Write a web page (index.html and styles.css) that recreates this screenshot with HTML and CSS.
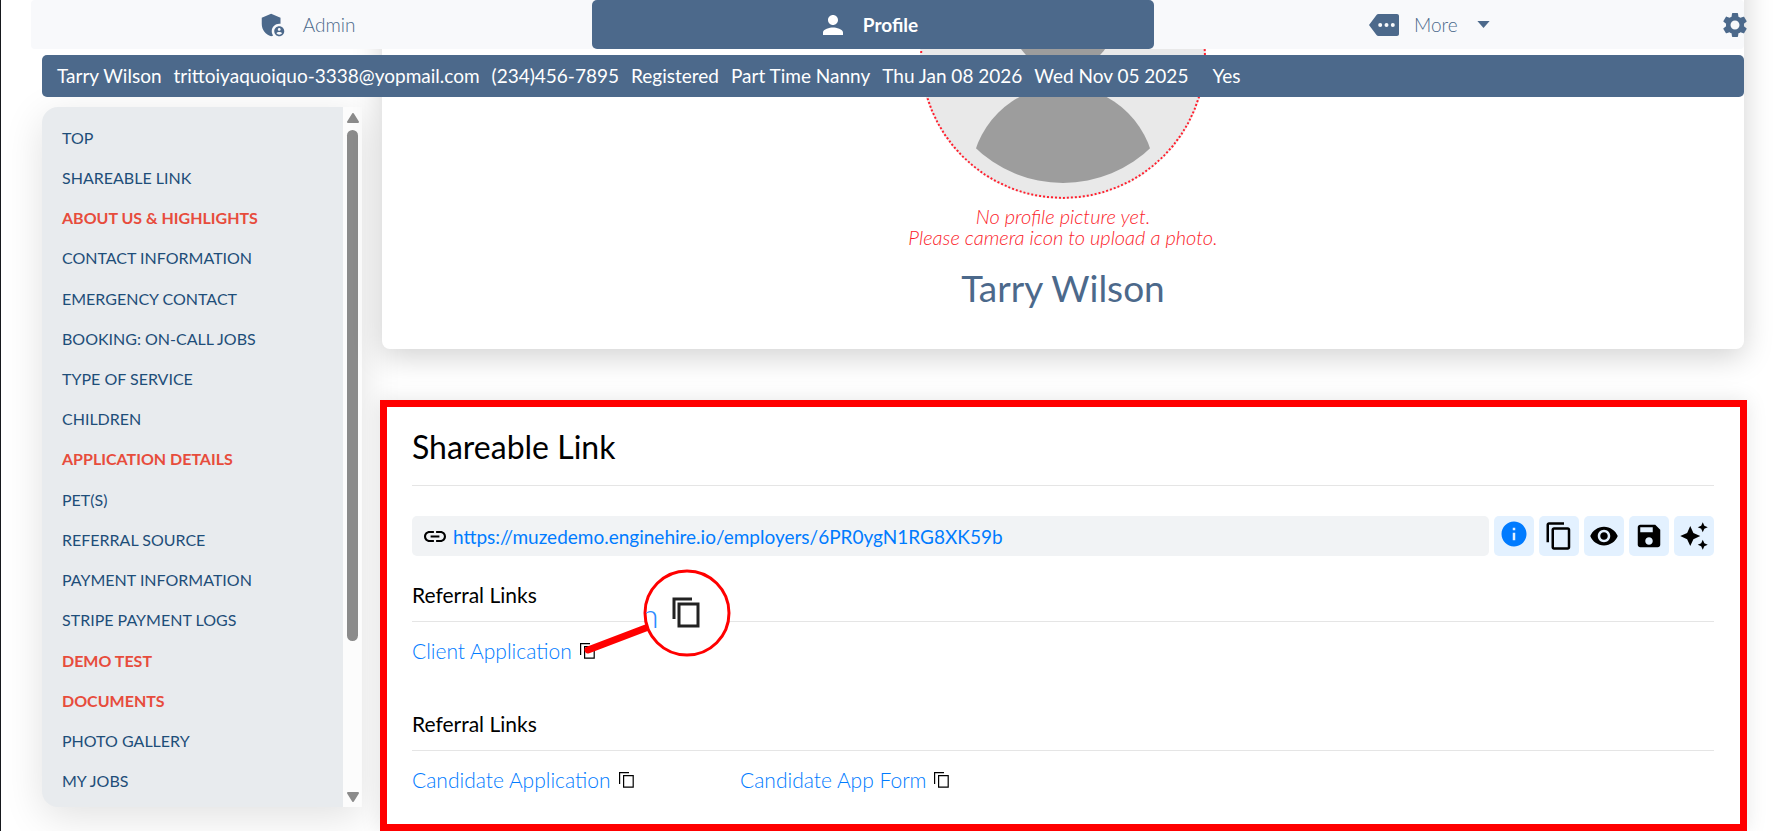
FILE: index.html
```html
<!DOCTYPE html>
<html lang="en">
<head>
<meta charset="utf-8">
<title>Tarry Wilson - Profile</title>
<link rel="stylesheet" href="styles.css">
</head>
<body>
<svg class="sprite" aria-hidden="true">
  <symbol id="copy" viewBox="0 0 24 24"><path d="M16 1H4c-1.100 0-2 .9-2 2v14h2V3h12V1zm3 4H8c-1.100 0-2 .9-2 2v14c0 1.100.9 2 2 2h11c1.100 0 2-.9 2-2V7c0-1.100-.9-2-2-2zm0 16H8V7h11v14z"/></symbol>
  <symbol id="copy-thin" viewBox="0 0 15 16"><path d="M.6 12V.6H10M4.600 3.600h9.600v11.600H4.600z" fill="none" stroke="currentColor" stroke-width="1.200"/></symbol>
</svg>

<header class="top">
  <nav class="tabs">
    <a class="tab" href="#admin">
      <svg class="tab-icon" viewBox="0 0 24 24"><path d="M17 11c.34 0 .67.040 1 .09V6.270L10.500 3 3 6.270v4.910c0 4.540 3.200 8.790 7.500 9.820.55-.13 1.080-.32 1.600-.55-.69-.98-1.100-2.170-1.100-3.450 0-3.310 2.690-6 6-6z"/><path fill-rule="evenodd" d="M17 13c-2.210 0-4 1.790-4 4s1.790 4 4 4 4-1.790 4-4-1.790-4-4-4zm0 1.380c.62 0 1.120.51 1.120 1.120s-.51 1.120-1.120 1.120-1.120-.51-1.120-1.120.5-1.120 1.120-1.120zm0 5.370c-.93 0-1.740-.46-2.240-1.170.05-.72 1.510-1.080 2.240-1.080s2.190.36 2.240 1.080c-.5.71-1.310 1.170-2.240 1.170z"/></svg>
      <span>Admin</span>
    </a>
    <a class="tab tab-active" href="#profile" aria-current="page">
      <svg class="tab-icon" viewBox="0 0 24 24"><path d="M12 12c2.210 0 4-1.790 4-4s-1.790-4-4-4-4 1.790-4 4 1.790 4 4 4zm0 2c-2.670 0-8 1.340-8 4v2h16v-2c0-2.660-5.330-4-8-4z"/></svg>
      <span>Profile</span>
    </a>
    <button class="tab tab-more" type="button">
      <svg class="more-icon" viewBox="0 0 30 22"><path fill-rule="evenodd" d="M28 0H9.500C8.600 0 8 .4 7.500 1.100L0 11l7.500 9.900c.5.700 1.100 1.100 2 1.100H28c1.100 0 2-.9 2-2V2c0-1.100-.9-2-2-2zM11.200 13a2 2 0 1 1 0-4 2 2 0 0 1 0 4zm6.300 0a2 2 0 1 1 0-4 2 2 0 0 1 0 4zm6.300 0a2 2 0 1 1 0-4 2 2 0 0 1 0 4z"/></svg>
      <span>More</span>
      <svg class="caret" viewBox="0 0 14 8"><path d="M0 0h14L7 8z"/></svg>
    </button>
    <button class="gear" type="button" aria-label="Settings">
      <svg class="gear-icon" viewBox="0 0 24 24"><path d="M19.140 12.940c.04-.3.060-.61.060-.94 0-.32-.02-.64-.07-.94l2.030-1.580c.18-.14.230-.41.120-.61l-1.920-3.320c-.12-.22-.37-.29-.59-.22l-2.390.96c-.5-.38-1.030-.7-1.620-.94L14.400 2.810c-.04-.24-.24-.41-.48-.41h-3.840c-.24 0-.43.170-.47.410L9.250 5.350c-.59.240-1.130.570-1.620.940L5.240 5.330c-.22-.08-.47 0-.59.220L2.740 8.870c-.12.210-.08.470.12.610l2.030 1.580c-.05.300-.09.630-.09.940s.02.640.070.940l-2.030 1.580c-.18.140-.23.410-.12.610l1.920 3.320c.12.220.370.290.590.220l2.390-.96c.5.380 1.030.7 1.620.940l.36 2.540c.05.240.240.410.480.410h3.840c.24 0 .44-.17.470-.41l.36-2.540c.59-.24 1.130-.56 1.620-.94l2.390.96c.22.080.470 0 .59-.22l1.920-3.320c.12-.22.070-.47-.12-.61l-2.010-1.580zM12 15.600c-1.980 0-3.600-1.620-3.600-3.600s1.620-3.600 3.600-3.600 3.600 1.620 3.600 3.600-1.620 3.600-3.600 3.600z"/></svg>
    </button>
  </nav>
  <div class="summary">
    <span>Tarry Wilson</span>
    <span>trittoiyaquoiquo-3338@yopmail.com</span>
    <span>(234)456-7895</span>
    <span>Registered</span>
    <span>Part Time Nanny</span>
    <span>Thu Jan 08 2026</span>
    <span>Wed Nov 05 2025</span>
    <span class="summary-flag">Yes</span>
  </div>
</header>

<div class="layout">
  <aside class="sidebar">
    <ul class="menu">
      <li><a href="#top">TOP</a></li>
      <li><a href="#share">SHAREABLE LINK</a></li>
      <li><a class="alert" href="#about">ABOUT US &amp; HIGHLIGHTS</a></li>
      <li><a href="#contact">CONTACT INFORMATION</a></li>
      <li><a href="#emergency">EMERGENCY CONTACT</a></li>
      <li><a href="#booking">BOOKING: ON-CALL JOBS</a></li>
      <li><a href="#service">TYPE OF SERVICE</a></li>
      <li><a href="#children">CHILDREN</a></li>
      <li><a class="alert" href="#application">APPLICATION DETAILS</a></li>
      <li><a href="#pets">PET(S)</a></li>
      <li><a href="#referral">REFERRAL SOURCE</a></li>
      <li><a href="#payment">PAYMENT INFORMATION</a></li>
      <li><a href="#stripe">STRIPE PAYMENT LOGS</a></li>
      <li><a class="alert" href="#demo">DEMO TEST</a></li>
      <li><a class="alert" href="#documents">DOCUMENTS</a></li>
      <li><a href="#gallery">PHOTO GALLERY</a></li>
      <li><a href="#jobs">MY JOBS</a></li>
    </ul>
    <div class="scrollbar" aria-hidden="true">
      <svg class="arrow" viewBox="0 0 12 10"><path d="M6 1l5 8H1z" stroke-width="2" stroke-linejoin="round"/></svg>
      <div class="track"><div class="thumb"></div></div>
      <svg class="arrow" viewBox="0 0 12 10"><path d="M6 9l5-8H1z" stroke-width="2" stroke-linejoin="round"/></svg>
    </div>
  </aside>

  <main class="content">
    <section class="card profile">
      <div class="avatar">
        <svg class="avatar-art" viewBox="0 0 282 282" aria-hidden="true">
          <clipPath id="bust"><circle cx="141" cy="141" r="127"/></clipPath>
          <g fill="#9d9d9d"><circle cx="141" cy="102" r="53"/><circle cx="141" cy="263" r="92" clip-path="url(#bust)"/></g>
        </svg>
      </div>
      <p class="hint">No profile picture yet.<br>Please camera icon to upload a photo.</p>
      <h1 class="name">Tarry Wilson</h1>
    </section>

    <section class="share" id="share">
      <h2 class="share-title">Shareable Link</h2>
      <div class="link-row">
        <div class="link-box">
          <svg class="link-icon" viewBox="2 7 20 10"><path d="M3.900 12c0-1.710 1.390-3.100 3.100-3.100h4V7H7c-2.760 0-5 2.240-5 5s2.240 5 5 5h4v-1.900H7c-1.710 0-3.100-1.390-3.100-3.100zM8 13h8v-2H8v2zm9-6h-4v1.900h4c1.710 0 3.100 1.390 3.100 3.100s-1.390 3.100-3.100 3.100h-4V17h4c2.760 0 5-2.240 5-5s-2.240-5-5-5z"/></svg>
          <a href="https://muzedemo.enginehire.io/employers/6PR0ygN1RG8XK59b">https://muzedemo.enginehire.io/employers/6PR0ygN1RG8XK59b</a>
        </div>
        <button class="action action-info" type="button" aria-label="Info"><svg viewBox="0 0 24 24"><path d="M12 2C6.480 2 2 6.480 2 12s4.480 10 10 10 10-4.480 10-10S17.520 2 12 2zm1 15h-2v-6h2v6zm0-8h-2V7h2v2z"/></svg></button>
        <button class="action" type="button" aria-label="Copy"><svg viewBox="0 0 24 24"><use href="#copy"/></svg></button>
        <button class="action" type="button" aria-label="View"><svg viewBox="0 0 24 24"><path d="M12 4.500C7 4.500 2.730 7.610 1 12c1.730 4.390 6 7.500 11 7.500s9.270-3.110 11-7.500c-1.730-4.390-6-7.500-11-7.500zM12 17c-2.760 0-5-2.240-5-5s2.240-5 5-5 5 2.240 5 5-2.240 5-5 5zm0-8c-1.660 0-3 1.340-3 3s1.340 3 3 3 3-1.340 3-3-1.340-3-3-3z"/></svg></button>
        <button class="action" type="button" aria-label="Save"><svg viewBox="0 0 24 24"><path d="M17 3H5c-1.110 0-2 .9-2 2v14c0 1.100.89 2 2 2h14c1.100 0 2-.9 2-2V7l-4-4zm-5 16c-1.660 0-3-1.340-3-3s1.340-3 3-3 3 1.340 3 3-1.340 3-3 3zm3-10H5V5h10v4z"/></svg></button>
        <button class="action" type="button" aria-label="Generate"><svg viewBox="0 0 24 24"><path d="M19 9l1.250-2.750L23 5l-2.750-1.250L19 1l-1.250 2.750L15 5l2.750 1.250L19 9zm-7.500.5L9 4 6.500 9.500 1 12l5.500 2.500L9 20l2.500-5.500L17 12l-5.500-2.500zM19 15l-1.250 2.750L15 19l2.750 1.250L19 23l1.250-2.750L23 19l-2.750-1.250L19 15z"/></svg></button>
      </div>

      <h3 class="sub-title">Referral Links</h3>
      <div class="refs">
        <div class="ref"><a href="#client-app">Client Application</a><button class="mini" type="button" aria-label="Copy client link"><svg viewBox="0 0 15 16"><use href="#copy-thin"/></svg></button></div>
      </div>

      <h3 class="sub-title">Referral Links</h3>
      <div class="refs refs-last">
        <div class="ref"><a href="#candidate-app">Candidate Application</a><button class="mini" type="button" aria-label="Copy candidate link"><svg viewBox="0 0 15 16"><use href="#copy-thin"/></svg></button></div>
        <div class="ref"><a href="#candidate-form">Candidate App Form</a><button class="mini" type="button" aria-label="Copy form link"><svg viewBox="0 0 15 16"><use href="#copy-thin"/></svg></button></div>
      </div>

      <svg class="callout" viewBox="0 0 154 88" aria-hidden="true">
        <clipPath id="lens"><circle cx="110" cy="44" r="41"/></clipPath>
        <path d="M11 81L74 57" stroke="#f00" stroke-width="7" stroke-linecap="round"/>
        <circle cx="110" cy="44" r="42" fill="#fff" stroke="#f00" stroke-width="3"/>
        <text class="callout-text" x="63" y="59" clip-path="url(#lens)">n</text>
        <path d="M97 50V30h18M102 35h19v22h-19z" fill="none" stroke="#222" stroke-width="3"/>
      </svg>
    </section>
  </main>
</div>
</body>
</html>
```
FILE: styles.css
```css
* {
  box-sizing: border-box;
}

body {
  margin: 0;
  height: 100vh;
  overflow: hidden;
  border-left: 1px solid #16181d;
  background: #fff;
  color: #000;
  font-family: Lato, "Open Sans", sans-serif;
  font-size: 19px;
}

a {
  color: #007bff;
  text-decoration: none;
}

button {
  padding: 0;
  border: 0;
  background: none;
  font: inherit;
}

svg {
  display: block;
  fill: currentColor;
}

.sprite {
  position: absolute;
  width: 0;
  height: 0;
}

.top {
  position: absolute;
  z-index: 2;
  top: 0;
  left: 31px;
  right: 29px;
}

.tabs {
  display: flex;
  height: 49px;
  border-radius: 4px;
  background: #f8f9fb;
}

.tab {
  display: flex;
  flex: 1;
  align-items: center;
  justify-content: center;
  gap: 15px;
  padding: 0 10px 0 0;
  border-radius: 5px;
  color: #4c698b;
  font-weight: 300;
}

.tab-active {
  background: #4c698b;
  color: #fff;
  font-weight: 700;
}

.tab-icon {
  width: 30px;
  height: 30px;
}

.more-icon {
  width: 30px;
  height: 22px;
}

.caret {
  width: 13px;
  height: 7px;
  margin-left: 4px;
}

.gear {
  display: flex;
  align-items: center;
  width: 29px;
  padding-left: 5px;
  color: #4c698b;
}

.gear-icon {
  flex: none;
  width: 30px;
  height: 30px;
}

.summary {
  display: flex;
  align-items: center;
  gap: 12px;
  height: 42px;
  margin: 6px 0 0 11px;
  padding: 0 15px 2px;
  border-radius: 5px;
  background: #4c698b;
  color: #fff;
}

.summary-flag {
  margin-left: 12px;
}

.layout {
  display: grid;
  grid-template-columns: 320px 1fr;
  gap: 20px;
  align-items: start;
  padding: 0 29px 0 41px;
}

.sidebar {
  display: flex;
  height: calc(100vh - 131px);
  margin-top: 107px;
  border-radius: 16px 0 0 16px;
  background: #e8ebee;
  box-shadow: 0 10px 40px rgba(0, 0, 0, 0.12);
}

.menu {
  display: flex;
  flex: 1;
  flex-direction: column;
  margin: 0;
  padding: 10px 0 6px 20px;
  list-style: none;
  font-size: 16px;
}

.menu li {
  display: flex;
  flex: 1;
  align-items: center;
}

.menu a {
  color: #1e4e79;
}

.menu .alert {
  color: #e74c3c;
  font-weight: 700;
}

.scrollbar {
  display: flex;
  flex-direction: column;
  align-items: center;
  gap: 7px;
  width: 19px;
  padding: 6px 0 5px;
  background: #fcfcfc;
  color: #8b8b8b;
}

.arrow {
  width: 12px;
  height: 10px;
  stroke: currentColor;
}

.track {
  flex: 1;
}

.thumb {
  width: 11px;
  height: 78%;
  border-radius: 6px;
  background: #8b8b8b;
}

.card {
  border-radius: 8px;
  background: #fff;
  box-shadow: 0 8px 30px rgba(0, 0, 0, 0.18);
}

.profile {
  display: flex;
  flex-direction: column;
  align-items: center;
  margin-top: -87px;
  padding-bottom: 40px;
}

.avatar {
  width: 286px;
  height: 286px;
  border: 2px dotted #ff1f2d;
  border-radius: 50%;
  background: #e9e9e9;
}

.hint {
  margin: 7px 0 0;
  color: #fb1c2a;
  font-size: 20px;
  font-style: italic;
  font-weight: 300;
  line-height: 21px;
  text-align: center;
}

.name {
  margin: 18px 0 0;
  color: #4c698b;
  font-size: 37px;
  font-weight: 400;
  line-height: 43px;
}

.share {
  position: relative;
  margin: 51px -3px 0 -2px;
  padding: 22px 26px 0 25px;
  border: 7px solid #f00;
  background: #fff;
  box-shadow: 0 0 20px rgba(0, 0, 0, 0.1);
}

.share-title {
  margin: 0 0 30px;
  padding-bottom: 20px;
  border-bottom: 1px solid #e5e5e5;
  font-size: 32px;
  font-weight: 400;
  line-height: 36px;
}

.link-row {
  display: flex;
  gap: 5px;
}

.link-box {
  display: flex;
  flex: 1;
  align-items: center;
  gap: 7px;
  height: 40px;
  padding: 0 12px;
  border-radius: 5px;
  background: #f1f3f5;
}

.link-icon {
  width: 22px;
  height: 11px;
}

.action {
  display: flex;
  align-items: center;
  justify-content: center;
  width: 40px;
  height: 40px;
  border-radius: 5px;
  background: #e3f1ff;
  color: #000;
}

.action svg {
  width: 30px;
  height: 30px;
}

.action-info {
  padding-bottom: 4px;
  color: #007bff;
}

.sub-title {
  margin: 27px 0 0;
  padding-bottom: 14px;
  border-bottom: 1px solid #e5e5e5;
  font-size: 21px;
  font-weight: 400;
  line-height: 24px;
}

.refs {
  display: grid;
  grid-template-columns: repeat(4, 1fr);
  gap: 10px;
  padding: 17px 0 22px;
  font-size: 21px;
  font-weight: 300;
  line-height: 24px;
}

.refs + .sub-title {
  margin-top: 27px;
}

.refs-last {
  padding-bottom: 32px;
}

.ref {
  display: flex;
  align-items: center;
  gap: 8px;
}

.mini {
  width: 15px;
  height: 16px;
  color: #000;
}

.callout {
  position: absolute;
  left: 190px;
  top: 162px;
  width: 154px;
  height: 88px;
}

.callout-text {
  fill: #2a8cff;
  font-size: 34px;
  font-weight: 300;
}
```
